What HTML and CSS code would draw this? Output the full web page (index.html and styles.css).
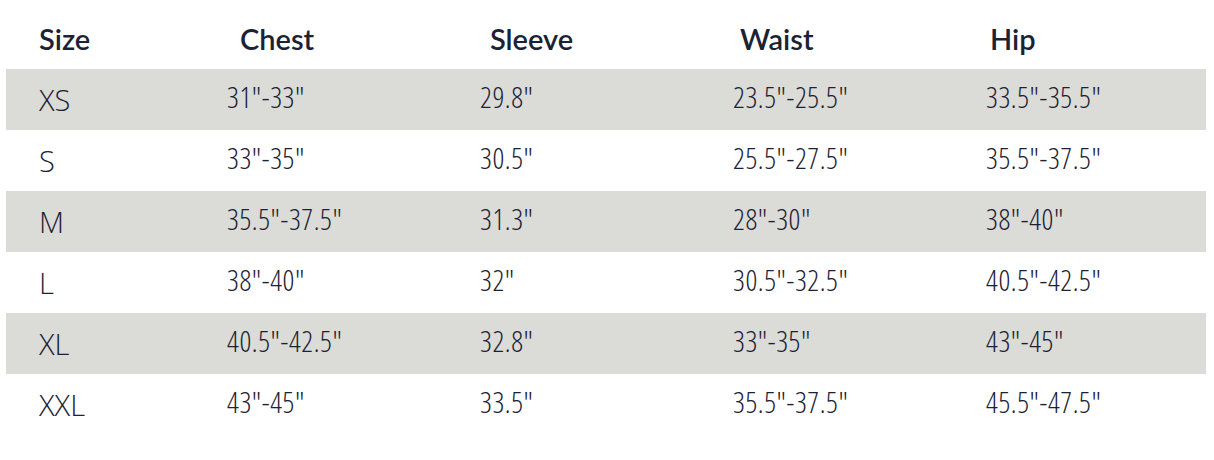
FILE: index.html
```html
<!DOCTYPE html>
<html lang="en">
<head>
<meta charset="utf-8">
<title>Size chart</title>
<link rel="stylesheet" href="styles.css">
</head>
<body>
<div class="chart">
  <div class="row head">
    <div class="cell">Size</div>
    <div class="cell">Chest</div>
    <div class="cell">Sleeve</div>
    <div class="cell">Waist</div>
    <div class="cell">Hip</div>
  </div>
  <div class="row data shade">
    <div class="cell size">XS</div>
    <div class="cell">31"-33"</div>
    <div class="cell">29.8"</div>
    <div class="cell">23.5"-25.5"</div>
    <div class="cell">33.5"-35.5"</div>
  </div>
  <div class="row data">
    <div class="cell size">S</div>
    <div class="cell">33"-35"</div>
    <div class="cell">30.5"</div>
    <div class="cell">25.5"-27.5"</div>
    <div class="cell">35.5"-37.5"</div>
  </div>
  <div class="row data shade">
    <div class="cell size">M</div>
    <div class="cell">35.5"-37.5"</div>
    <div class="cell">31.3"</div>
    <div class="cell">28"-30"</div>
    <div class="cell">38"-40"</div>
  </div>
  <div class="row data">
    <div class="cell size">L</div>
    <div class="cell">38"-40"</div>
    <div class="cell">32"</div>
    <div class="cell">30.5"-32.5"</div>
    <div class="cell">40.5"-42.5"</div>
  </div>
  <div class="row data shade">
    <div class="cell size">XL</div>
    <div class="cell">40.5"-42.5"</div>
    <div class="cell">32.8"</div>
    <div class="cell">33"-35"</div>
    <div class="cell">43"-45"</div>
  </div>
  <div class="row data">
    <div class="cell size">XXL</div>
    <div class="cell">43"-45"</div>
    <div class="cell">33.5"</div>
    <div class="cell">35.5"-37.5"</div>
    <div class="cell">45.5"-47.5"</div>
  </div>
</div>
</body>
</html>
```
FILE: styles.css
```css
html, body {
  margin: 0;
  padding: 0;
  background: #ffffff;
}

.chart {
  margin: 8px 0 0 6px;
  width: 1200px;
  color: #1b2233;
}

.row {
  display: grid;
  height: 61px;
  align-items: center;
}

.head {
  grid-template-columns: 201px 250px 250px 250px 249px;
  font-family: Lato, "Noto Sans", sans-serif;
  font-weight: 600;
  font-size: 29px;
}

.data {
  grid-template-columns: 188px 253px 253px 253px 253px;
  font-family: "Open Sans", "Liberation Sans", sans-serif;
  font-stretch: 75%;
  font-weight: 300;
  font-size: 29px;
  letter-spacing: 0.6px;
}

.shade {
  background: #dbdbd7;
}

.cell {
  padding-left: 33px;
  white-space: nowrap;
}

.data .cell {
  padding-bottom: 6px;
}

.data .size {
  padding-bottom: 0;
  padding-left: 33px;
  font-stretch: 100%;
  font-size: 29px;
  letter-spacing: 0;
}
```
